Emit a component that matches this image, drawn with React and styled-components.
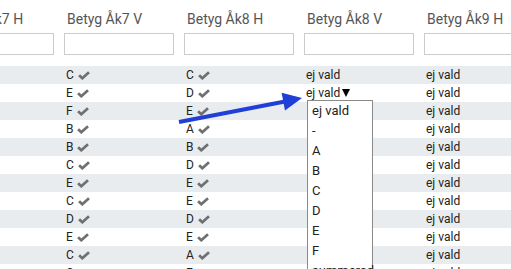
import styled, { createGlobalStyle } from "styled-components";

const GlobalStyle = createGlobalStyle`
  html, body {
    margin: 0;
    padding: 0;
    background: #fff;
    overflow: hidden;
  }
  body {
    font-family: Roboto, "Liberation Sans", sans-serif;
  }
`

const Page = styled.div`
  position: relative;
  width: 511px;
  height: 269px;
  overflow: hidden;
`

const Grid = styled.table`
  margin-left: -56px;
  border-collapse: collapse;
  table-layout: fixed;
  width: 600px;
`

const HeadCell = styled.th`
  width: 120px;
  padding: 10px 0 11px 0;
  text-align: left;
  vertical-align: top;
  font-weight: normal;
  font-size: 14px;
  line-height: 18px;
  color: #555;
  white-space: nowrap;
`

const Label = styled.div`
  padding-left: 3px;
`

const Filter = styled.input`
  display: block;
  box-sizing: border-box;
  width: 110px;
  height: 22px;
  margin: 5px 0 0 0;
  border: 1px solid #ccc;
  outline: none;
  padding: 0 4px;
`

const Row = styled.tr`
  background: ${p => (p.$striped ? "#e9ecef" : "transparent")};
`

const Cell = styled.td`
  position: relative;
  height: 18px;
  padding: 0 0 0 2px;
  font-size: 12px;
  line-height: 18px;
  color: #222;
  white-space: nowrap;
`

const Check = styled.svg`
  margin-left: 4px;
  vertical-align: -1px;
`

const Caret = styled.span`
  display: inline-block;
  width: 0;
  height: 0;
  margin-left: 2px;
  border-left: 4.5px solid transparent;
  border-right: 4.5px solid transparent;
  border-top: 8px solid #000;
`

const Dropdown = styled.div`
  position: absolute;
  top: 16px;
  left: 3px;
  z-index: 2;
  box-sizing: border-box;
  width: 66px;
  background: #fff;
  border: 1px solid #8a8a8a;
`

const Option = styled.div`
  height: 20px;
  padding-left: 4px;
  font-size: 13px;
  line-height: 20px;
  color: #222;
`

const Arrow = styled.svg`
  position: absolute;
  top: 0;
  left: 0;
  z-index: 3;
  pointer-events: none;
`

const columns = ["Betyg Åk7 H", "Betyg Åk7 V", "Betyg Åk8 H", "Betyg Åk8 V", "Betyg Åk9 H"]

const grades = [
  ["C", "C"],
  ["E", "D"],
  ["F", "E"],
  ["B", "A"],
  ["B", "B"],
  ["C", "D"],
  ["E", "E"],
  ["C", "E"],
  ["D", "D"],
  ["E", "E"],
  ["C", "A"],
  ["C", "E"],
]

const options = ["ej vald", "-", "A", "B", "C", "D", "E", "F", "summerad"]

function Grade({ value }) {
  return <>
    {value}
    <Check width="12" height="9" viewBox="0 0 12 9">
      <path d="M1.1 4.2 L4.3 7.2 L11 1.3" fill="none" stroke="#707070" strokeWidth="2.8" />
    </Check>
  </>
}

export default function App() {
  return <Page>
    <GlobalStyle />
    <Grid>
      <thead>
        <tr>
          {columns.map(c => (
            <HeadCell key={c}>
              <Label>{c}</Label>
              <Filter type="text" />
            </HeadCell>
          ))}
        </tr>
      </thead>
      <tbody>
        {grades.map(([a, b], i) => (
          <Row key={i} $striped={i % 2 === 0}>
            <Cell></Cell>
            <Cell><Grade value={a} /></Cell>
            <Cell><Grade value={b} /></Cell>
            {i === 0 && <Cell>ej vald</Cell>}
            {i === 1 && (
              <Cell>
                ej vald<Caret />
                <Dropdown>
                  {options.map(o => <Option key={o}>{o}</Option>)}
                </Dropdown>
              </Cell>
            )}
            {i > 1 && <Cell></Cell>}
            <Cell>ej vald</Cell>
          </Row>
        ))}
      </tbody>
    </Grid>
    <Arrow width="511" height="269" viewBox="0 0 511 269">
      <line x1="179" y1="122" x2="285" y2="101.5" stroke="#1f3fd6" strokeWidth="4" />
      <polygon points="302,98 281.6,92.8 285,110.4" fill="#1f3fd6" />
    </Arrow>
  </Page>
}
